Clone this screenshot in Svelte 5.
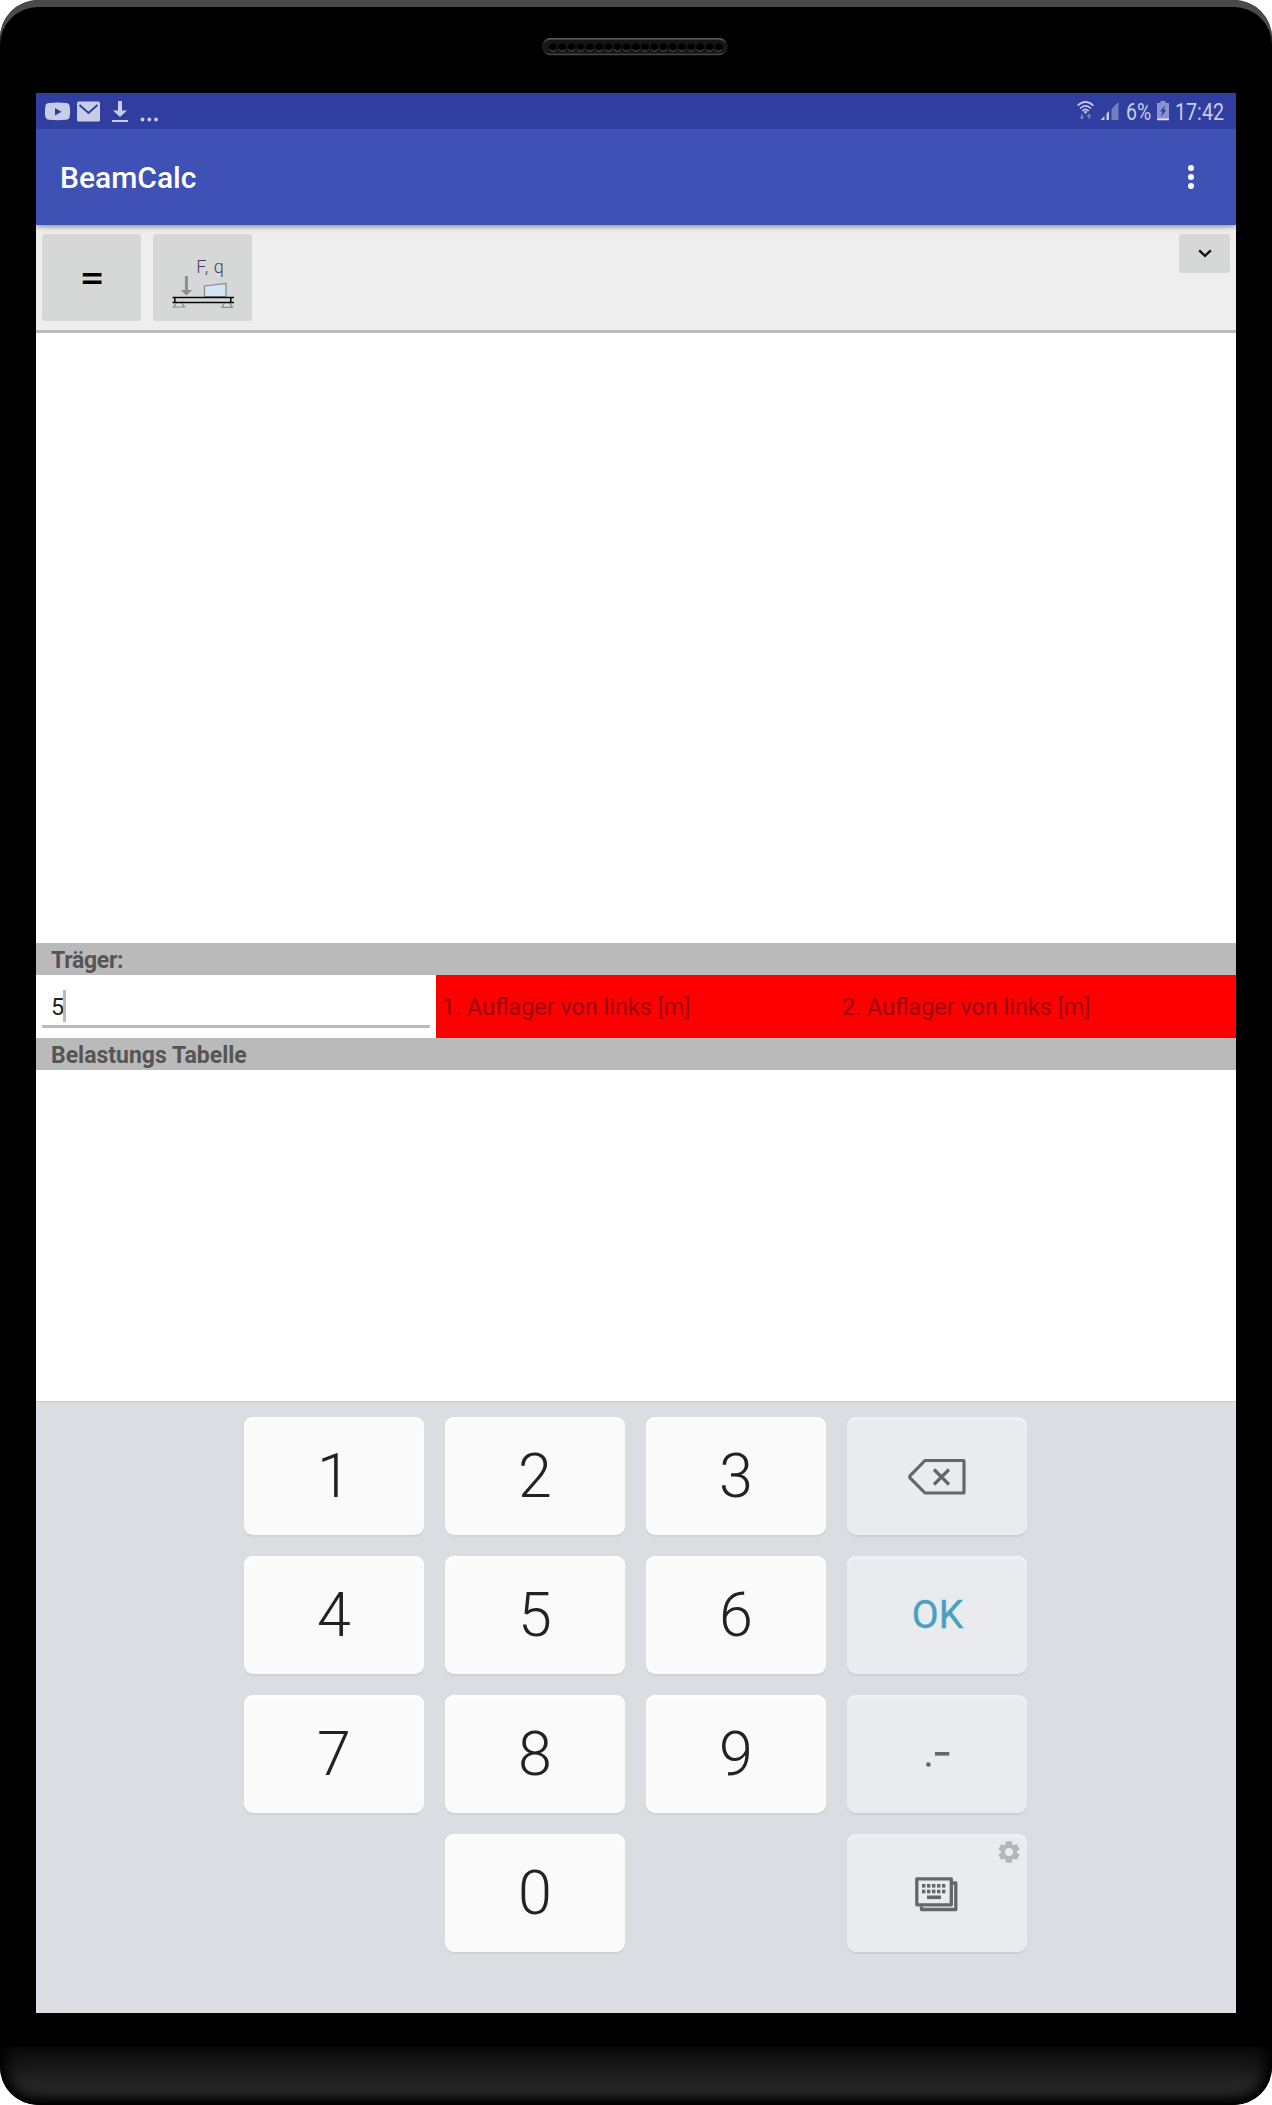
<script>
  const rows = [
    ['1', '2', '3', 'del'],
    ['4', '5', '6', 'ok'],
    ['7', '8', '9', 'sym'],
    ['', '0', '', 'kbd'],
  ];
  const keys = rows.flat();
  const holes = Array.from({ length: 19 }, (_, i) => 11.1 + i * 9.2);
  const dots = [7, 12, 17, 22, 27];
  const teeth = [0, 60, 120, 180, 240, 300];
</script>

<div class="device">
  <div class="bezel-top">
    <svg class="speaker" width="186" height="18" viewBox="0 0 186 18">
      <defs>
        <linearGradient id="rim" x1="0" y1="0" x2="0" y2="1">
          <stop offset="0" stop-color="#565656" />
          <stop offset="0.3" stop-color="#1c1c1c" />
          <stop offset="0.8" stop-color="#1c1c1c" />
          <stop offset="1" stop-color="#444" />
        </linearGradient>
      </defs>
      <rect x="0.8" y="0.8" width="184" height="15.6" rx="7.8" fill="#161616" stroke="url(#rim)" stroke-width="1.8" />
      {#each holes as x}
        <circle cx={x} cy="9.3" r="3.9" fill="#000" />
        <path d="M{x - 3.4} 11.2A3.9 3.9 0 0 0 {x + 3.4} 11.2" fill="none" stroke="#5c5c5c" stroke-width="1" />
      {/each}
    </svg>
  </div>

  <main class="screen">
    <div class="status">
      <div class="notices">
        <svg width="115" height="24" viewBox="0 0 115 24">
          <g fill="#c9cce6">
            <path fill-rule="evenodd" d="M4 2Q12.500 1 21 2Q24.500 2 24.700 5.500Q25.500 10.500 24.700 15.500Q24.500 18.500 21 18.800Q12.500 19.500 4 18.800Q.8 18.500.3 15.500Q-.5 10.500.3 5.500Q.5 2.300 4 2zM10 7V14.500L16.500 10.700z" />
            <rect x="32" y=".5" width="23" height="20" rx="1.500" />
            <path d="M73 0h4v9.500h5L75 16l-7-6.500h5zM67 19h16v2H67z" />
            <circle cx="97.500" cy="18.500" r="1.900" />
            <circle cx="104.300" cy="18.500" r="1.900" />
            <circle cx="111.100" cy="18.500" r="1.900" />
          </g>
          <path d="M34.500 4L43.500 12L52.500 4" fill="none" stroke="#303f9f" stroke-width="2" />
        </svg>
      </div>
      <div class="indicators">
        <svg width="42" height="20" viewBox="0 0 42 20">
          <g fill="none" stroke="#c9cce6" stroke-width="1.600">
            <path d="M.5 4.800Q8.500-3 16.500 4.800" />
            <path d="M3 7.500Q8.500 2.300 14 7.500" />
            <path d="M5.300 9.800Q8.500 7 11.700 9.800" />
          </g>
          <path d="M6.500 10.800Q8.500 9.300 10.500 10.800L8.500 13z" fill="#c9cce6" />
          <path d="M5 13v4M3.300 15.700L5 17.500l1.700-1.800M12 18v-4M10.300 15.500L12 13.500l1.700 2" fill="none" stroke="#7780c1" stroke-width="1.400" />
          <path d="M23.500 19l4-4v4zM29.500 19v-6.500l2.500-2.500v9z" fill="#c9cce6" />
          <path d="M34.500 19V8L41.500 .8V19z" fill="#747dc0" />
        </svg>
        <span class="pct">6%</span>
        <svg class="battery" width="12" height="20" viewBox="0 0 12 20">
          <path d="M3.500 0h5v2H12V19H0V2h3.500z" fill="#8d94cc" />
          <path d="M0 17.500h12V19.200H0z" fill="#e0e2f2" />
          <path d="M8.500 4L3 10.500h2.600L4 16l5.300-7H6.700z" fill="#303f9f" />
        </svg>
        <span class="clock">17:42</span>
      </div>
    </div>

    <header class="appbar">
      <h1>BeamCalc</h1>
      <div class="overflow"><i></i><i></i><i></i></div>
    </header>

    <div class="toolbar">
      <button class="tool equals"><span>=</span></button>
      <button class="tool">
        <svg width="99" height="87" viewBox="0 0 99 87">
          <text class="load" x="43.200" y="39" textLength="27.500" lengthAdjust="spacing">F, q</text>
          <path d="M31.900 42h3v14h4.300L33.400 61.500L27.800 56h4.100z" fill="#8e8e8e" />
          <path d="M51.500 52L73 49.500V62.500H51.500z" fill="#d0e6f5" stroke="#868a8c" stroke-width="1.200" />
          <path d="M23.500 69L20.500 73H31.500L28.500 69M71.500 69L69 73.300H79.500L76.500 69" fill="#d0e0ea" stroke="#858888" stroke-width="1.200" />
          <path d="M19.500 63.500H81M19.500 68.500H81M21.800 63.500V68.500M77.800 63.500V68.500" fill="none" stroke="#080808" stroke-width="1.500" />
        </svg>
      </button>
      <button class="collapse">
        <svg width="14" height="9" viewBox="0 0 14 9"><path d="M1.200 1.400L7 6.800L12.800 1.400" fill="none" stroke="#111" stroke-width="2.400" /></svg>
      </button>
    </div>

    <section class="canvas"></section>

    <h2 class="beam">Träger:</h2>
    <div class="fields">
      <div class="field filled"><span class="value">5</span><span class="caret"></span></div>
      <div class="field">1. Auflager von links [m]</div>
      <div class="field">2. Auflager von links [m]</div>
    </div>
    <h2>Belastungs Tabelle</h2>
    <section class="table"></section>

    <div class="keyboard">
      {#each keys as key}
        {#if key === ''}
          <span></span>
        {:else if key === 'del'}
          <button class="key alt">
            <svg class="del" width="58" height="37" viewBox="0 0 58 37" fill="none" stroke="#666" stroke-width="3.200" stroke-linejoin="round">
              <path d="M17 1.500H55Q56 1.500 56 2.500V33Q56 34 55 34H17L2 18.800Q1.300 17.800 2 16.800z" />
              <path d="M26 10.500L41 25.500M41 10.500L26 25.500" />
            </svg>
          </button>
        {:else if key === 'ok'}
          <button class="key alt ok">OK</button>
        {:else if key === 'sym'}
          <button class="key alt">
            <svg class="sym" width="24" height="15" viewBox="0 0 24 15" fill="#666">
              <circle cx="2.400" cy="12.500" r="2.300" />
              <rect x="9" y="0" width="14.300" height="3.600" />
            </svg>
          </button>
        {:else if key === 'kbd'}
          <button class="key alt">
            <svg class="kbd" width="43" height="35" viewBox="0 0 43 35">
              <g fill="none" stroke="#666" stroke-width="3.300" stroke-linejoin="round">
                <rect x="1.800" y="1.800" width="34.500" height="26" />
                <path d="M38 6H40.800V32.500H6.500V29.500" />
              </g>
              <g fill="#666">
                {#each dots as x}
                  <rect x={x} y="7" width="3.400" height="3.600" />
                  <rect x={x} y="12.700" width="3.400" height="3.600" />
                {/each}
                <rect x="12" y="18.500" width="14" height="3.600" />
              </g>
            </svg>
            <svg class="gear" width="22" height="22" viewBox="-11 -11 22 22">
              <g fill="#b5b6b9">
                {#each teeth as a}
                  <path d="M-3.200-6L-2.700-10.200H2.700L3.200-6z" transform="rotate({a})" stroke="#b5b6b9" stroke-width=".8" stroke-linejoin="round" />
                {/each}
              </g>
              <circle r="6" fill="none" stroke="#b5b6b9" stroke-width="4" />
            </svg>
          </button>
        {:else}
          <button class="key">{key}</button>
        {/if}
      {/each}
    </div>
  </main>

  <div class="bezel-bottom"></div>
</div>

<style>
  :global(body) { margin: 0; background: #fff; }
  .device {
    width: 1272px; height: 2105px; box-sizing: border-box;
    display: flex; flex-direction: column; align-items: center;
    background: #000; border-radius: 38px; overflow: hidden;
    font-family: Roboto, sans-serif;
  }
  .bezel-top {
    width: 100%; height: 93px; box-sizing: border-box; padding-top: 38px;
    display: flex; justify-content: center; align-items: flex-start;
    border-radius: 38px 38px 0 0;
    box-shadow: inset 0 7px 0 #4a4a4a;
  }
  .speaker { display: block; margin-right: 2px; }
  .screen { width: 1200px; height: 1920px; display: flex; flex-direction: column; background: #fff; }
  .status {
    height: 36px; background: #303f9f; display: flex; justify-content: space-between;
    padding: 0 12px 0 9px; color: #c9cce6;
  }
  .notices { padding-top: 8px; }
  .indicators { display: flex; align-items: flex-start; padding-top: 8px; line-height: 23px; font-size: 24px; }
  .indicators svg { display: block; }
  .pct { margin-left: 7px; width: 25px; transform-origin: 0 50%; transform: scaleX(.81); white-space: nowrap; }
  .battery { margin-left: 6px; }
  .clock { margin-left: 6px; width: 49px; transform-origin: 0 50%; transform: scaleX(.82); white-space: nowrap; }
  .appbar {
    height: 96px; background: #3f51b5; display: flex; align-items: center; justify-content: space-between;
    padding: 0 42px 0 24px; box-shadow: 0 1px 6px rgba(0, 0, 0, .5); clip-path: inset(0 0 -10px 0); z-index: 1;
  }
  h1 { margin: 0; padding-top: 2px; font-size: 30px; font-weight: 500; color: #fff; line-height: 36px; }
  .overflow { display: flex; flex-direction: column; gap: 3px; }
  .overflow i { width: 6px; height: 6px; border-radius: 50%; background: #fff; }
  .toolbar {
    height: 108px; box-sizing: border-box; border-bottom: 3px solid #bababa; background: #eee;
    display: flex; align-items: flex-start; gap: 12px; padding: 9px 6px;
  }
  button { border: 0; padding: 0; margin: 0; font-family: inherit; display: flex; align-items: center; justify-content: center; }
  .tool { width: 99px; height: 87px; border-radius: 3px; background: #d6d8d7; }
  .equals { font-size: 36px; font-weight: 500; color: #000; padding-left: 1px; }
  .equals span { transform: scaleX(1.22); }
  .load { font: 300 18px Roboto, sans-serif; fill: #4b3c5c; }
  .collapse { width: 51px; height: 39px; border-radius: 3px; background: #d6d8d7; margin-left: auto; }
  .canvas { height: 610px; }
  h2 {
    margin: 0; height: 32px; line-height: 36px; padding-left: 15px; background: #bababa;
    color: #555; font-size: 23px; font-weight: 700;
  }
  .beam { letter-spacing: -.3px; }
  .fields { height: 63px; display: grid; grid-template-columns: repeat(3, 400px); background: #fff; }
  .field { background: #f00; color: #9b0000; font-size: 23.400px; line-height: 65px; height: 63px; padding-left: 6px; }
  .filled {
    background: #fff; color: #212121; display: flex; align-items: center; height: 53px; box-sizing: border-box;
    margin: 0 6px; padding: 12px 0 0 9px; border-bottom: 3px solid #bababa; line-height: 32px;
  }
  .value { padding-top: 2px; }
  .caret { width: 3px; height: 32px; background: #bababa; margin-left: -1px; }
  .table { height: 331px; }
  .keyboard {
    flex: 1; box-sizing: border-box; border-top: 1px solid #c9cacd; background: #dcdde2;
    display: grid; grid-template-columns: repeat(4, 180px); grid-auto-rows: 118px; gap: 21px;
    justify-content: center; align-content: start; padding: 15px 1px 0 0;
  }
  .key {
    position: relative; height: 118px; border-radius: 9px; background: #fafafa; color: #222;
    font-size: 61px; font-weight: 300; line-height: 118px;
    box-shadow: inset 0 3px 2px #fff, 0 2px 1px #cfd1d7;
  }
  .alt { background: #eaebef; box-shadow: inset 0 3px 2px #f1f2f5, 0 2px 1px #cdced4; }
  .ok { color: #4aa0c0; font-size: 39px; font-weight: 400; -webkit-text-stroke: .4px #4aa0c0; padding-left: 1px; }
  .del { margin-top: 2px; }
  .sym { margin: 11px 0 0 2px; }
  .kbd { margin: 2px 2px 0 0; }
  .gear { position: absolute; top: 7px; right: 7px; }
  .bezel-bottom {
    width: 100%; height: 58px; margin-top: 34px;
    border-radius: 0 0 38px 38px;
    background: linear-gradient(#0b0b0b, #121212 22%, #242424 62%, #232323 78%, #1c1c1c);
    box-shadow: inset 0 -8px 10px -2px #000, inset 20px 0 16px -14px #000, inset -20px 0 16px -14px #000;
  }
</style>
